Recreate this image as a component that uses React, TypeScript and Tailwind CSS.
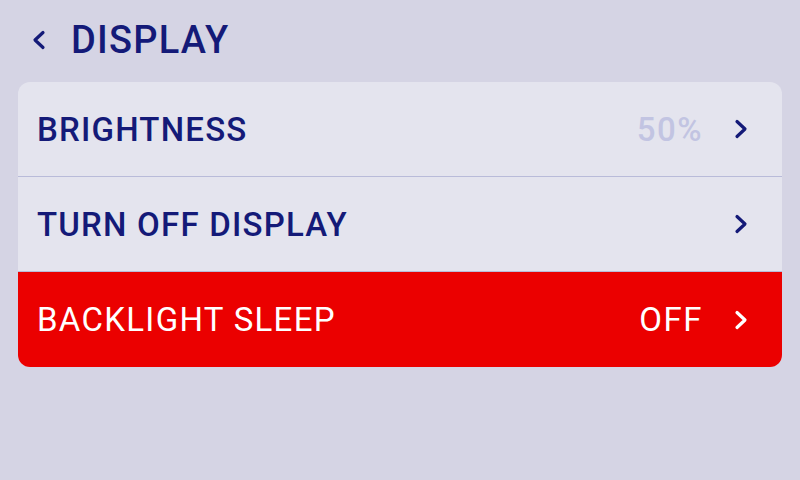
import { ReactNode } from 'react'

type Row = { label: string; value?: string; active?: boolean }

const rows: Row[] = [
  { label: 'BRIGHTNESS', value: '50%' },
  { label: 'TURN OFF DISPLAY' },
  { label: 'BACKLIGHT SLEEP', value: 'OFF', active: true },
]

function Chevron({ dir = 'right', className }: { dir?: 'left' | 'right'; className?: string }) {
  return (
    <svg width="14" height="22" viewBox="0 0 14 22" fill="none" className={className}>
      <path
        d={dir === 'right' ? 'M3 3.5 L11 11 L3 18.5' : 'M11 3.5 L3 11 L11 18.5'}
        stroke="currentColor"
        strokeWidth="3.2"
        strokeLinecap="round"
        strokeLinejoin="round"
      />
    </svg>
  )
}

function MenuRow({ row, last, children }: { row: Row; last: boolean; children?: ReactNode }) {
  return (
    <div
      className={
        'flex h-[95px] items-center pl-[19px] pr-[34px] ' +
        (row.active ? 'bg-[#eb0000] text-white' : 'text-[#141a78]') +
        (!last && !row.active ? ' border-b border-[#b9bbd9]' : '')
      }
    >
      <span
        className={
          'flex-1 text-[33px] leading-none ' +
          (row.active ? 'font-normal tracking-[1.3px]' : 'font-medium tracking-[1.2px]')
        }
      >
        {row.label}
      </span>
      {row.value && (
        <span
          className={
            'mr-[31px] text-[33px] leading-none tracking-[1.5px] ' +
            (row.active ? 'font-normal text-white' : 'font-medium text-[#c2c4e2]')
          }
        >
          {row.value}
        </span>
      )}
      <Chevron className={row.active ? 'text-white' : 'text-[#141a78]'} />
      {children}
    </div>
  )
}

export default function App() {
  return (
    <div
      className="h-[480px] w-[800px] bg-[#d5d4e4] px-[18px] pt-[22px]"
      style={{ fontFamily: 'Roboto, "Liberation Sans", sans-serif' }}
    >
      <header className="flex h-[36px] items-center pl-[14px] text-[#141a78]">
        <Chevron dir="left" className="h-[22px] w-[14px]" />
        <h1 className="ml-[25px] text-[38px] font-medium leading-none tracking-[1.2px]">DISPLAY</h1>
      </header>

      <main className="mt-[24px] overflow-hidden rounded-[12px] bg-[#e4e4ee]">
        {rows.map((row, i) => (
          <MenuRow key={row.label} row={row} last={i === rows.length - 1} />
        ))}
      </main>
    </div>
  )
}
